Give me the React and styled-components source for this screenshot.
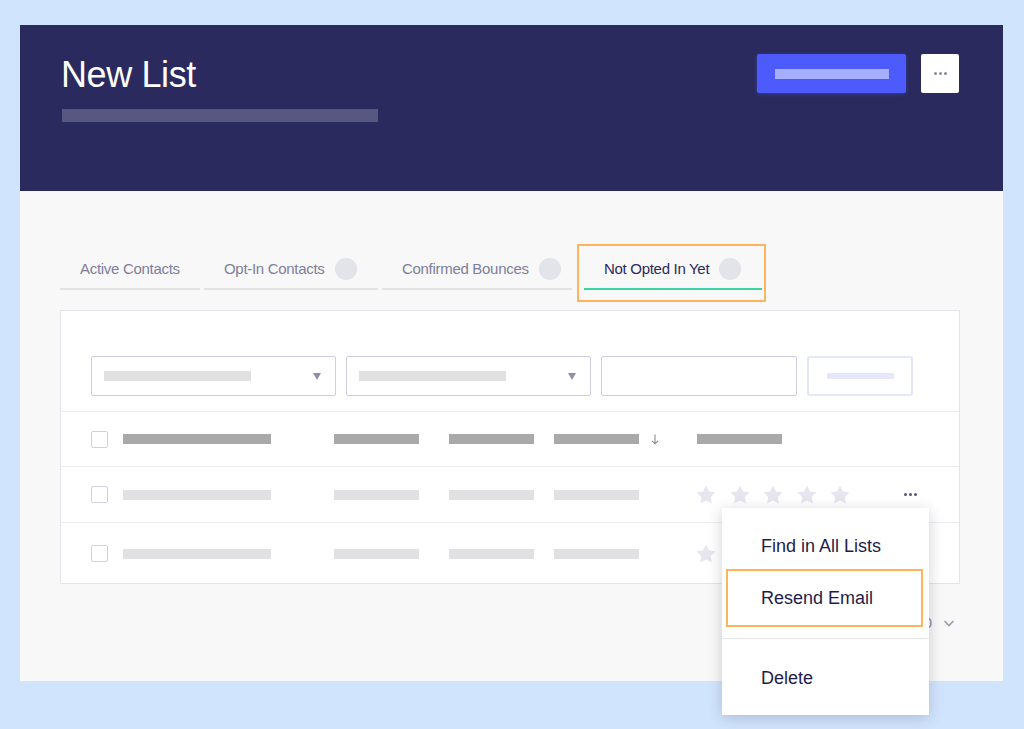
import React from 'react'
import styled, { createGlobalStyle } from 'styled-components'

const GlobalStyle = createGlobalStyle`
  html, body {
    margin: 0;
    padding: 0;
    background: #d1e4fd;
    font-family: "Liberation Sans", Arial, sans-serif;
  }
  body { height: 729px; overflow: hidden; }
`

const Frame = styled.div`
  position: relative;
  width: 983px;
  margin: 25px 0 0 20px;
`

const Header = styled.header`
  height: 166px;
  box-sizing: border-box;
  background: #2b2a5e;
  display: flex;
  justify-content: space-between;
  align-items: flex-start;
  padding: 29px 44px 0 41px;
`

const Title = styled.h1`
  margin: 0;
  font-size: 36px;
  line-height: 42px;
  font-weight: 400;
  color: #ffffff;
  letter-spacing: -0.4px;
`

const Bar = styled.div`
  width: ${p => p.$w}px;
  height: ${p => p.$h || 10}px;
  background: ${p => p.$c};
  flex-shrink: 0;
`

const SubBar = styled(Bar)`
  margin: 13px 0 0 1px;
`

const Actions = styled.div`
  display: flex;
  gap: 15px;
`

const PrimaryButton = styled.button`
  width: 149px;
  height: 39px;
  border: 0;
  border-radius: 2px;
  background: #4e5bfc;
  box-shadow: 0 1px 4px rgba(78, 91, 252, 0.35);
  display: flex;
  align-items: center;
  justify-content: center;
  padding: 0;
`

const MoreButton = styled.button`
  width: 38px;
  height: 39px;
  border: 0;
  border-radius: 2px;
  background: #ffffff;
  display: flex;
  align-items: center;
  justify-content: center;
  padding: 0;
`

const Dots = styled.span`
  display: flex;
  gap: 2px;
  & > i {
    width: 3px;
    height: 3px;
    border-radius: 50%;
    background: ${p => p.$c};
  }
`

const Body = styled.section`
  height: 490px;
  box-sizing: border-box;
  background: #f8f8f8;
  padding: 53px 43px 0 40px;
`

const TabRow = styled.div`
  display: flex;
  align-items: flex-start;
  gap: 4px;
`

const Tab = styled.div`
  width: ${p => p.$w}px;
  height: 41px;
  box-sizing: border-box;
  display: flex;
  align-items: center;
  gap: 10px;
  padding: 0 0 0 20px;
  margin-top: ${p => (p.$active ? 0 : 5)}px;
  border-bottom: 2px solid ${p => (p.$active ? '#3ad5a0' : '#e3e3e6')};
  font-size: 15px;
  color: ${p => (p.$active ? '#2b2a5e' : '#7d7f9b')};
  letter-spacing: -0.3px;
  white-space: nowrap;
`

const Badge = styled.span`
  width: 22px;
  height: 22px;
  border-radius: 50%;
  background: #e3e4ea;
`

const Highlight = styled.div`
  border: 2px solid #fdb55d;
  padding: 3px 2px 10px 5px;
  margin-left: 1px;
`

const Card = styled.div`
  margin-top: 8px;
  width: 900px;
  height: 274px;
  box-sizing: border-box;
  background: #ffffff;
  border: 1px solid #e4e4ea;
`

const Filters = styled.div`
  display: flex;
  gap: 10px;
  padding: 45px 0 15px 30px;
  border-bottom: 1px solid #ececf0;
`

const Field = styled.div`
  width: ${p => p.$w}px;
  height: 40px;
  box-sizing: border-box;
  border: 1px solid ${p => (p.$soft ? '#e4e6fb' : '#cfcde2')};
  border-width: ${p => (p.$soft ? 2 : 1)}px;
  border-radius: 2px;
  display: flex;
  align-items: center;
  justify-content: ${p => (p.$soft ? 'center' : 'space-between')};
  padding: ${p => (p.$soft ? 0 : '0 14px 0 12px')};
`

const Caret = styled.span`
  width: 0;
  height: 0;
  border-left: 4.5px solid transparent;
  border-right: 4.5px solid transparent;
  border-top: 7px solid #8d8ea9;
`

const Row = styled.div`
  display: grid;
  grid-template-columns: 32px 211px 115px 105px 143px 1fr;
  align-items: center;
  height: ${p => p.$h}px;
  box-sizing: border-box;
  padding: 0 42px 0 30px;
  border-bottom: ${p => (p.$last ? 0 : '1px solid #ececf0')};
`

const Check = styled.span`
  width: 17px;
  height: 17px;
  box-sizing: border-box;
  border: 1.5px solid #d0d0de;
  border-radius: 2px;
`

const Cell = styled.div`
  display: flex;
  align-items: center;
  gap: 12px;
  justify-content: ${p => (p.$spread ? 'space-between' : 'flex-start')};
`

const Stars = styled.div`
  display: flex;
  gap: 11.5px;
  margin-left: -2px;
`

const Footer = styled.div`
  width: 900px;
  display: flex;
  justify-content: flex-end;
  align-items: center;
  gap: 10px;
  margin-top: 30px;
  padding-right: 4px;
  box-sizing: border-box;
  font-size: 15px;
  color: #8b8ca6;
`

const Menu = styled.div`
  position: absolute;
  left: 702px;
  top: 483px;
  width: 207px;
  height: 207px;
  box-sizing: border-box;
  padding: 12px 0;
  background: #ffffff;
  box-shadow: 0 3px 14px rgba(30, 30, 60, 0.2);
`

const MenuItem = styled.div`
  height: ${p => (p.$marked ? 58 : 52)}px;
  box-sizing: border-box;
  display: flex;
  align-items: center;
  padding-left: ${p => (p.$marked ? 33 : 39)}px;
  margin: ${p => (p.$marked ? '-3px 6px -3px 4px' : 0)};
  border: ${p => (p.$marked ? '2px solid #fdb55d' : 0)};
  font-size: 18px;
  color: #1f1d4b;
`

const MenuDivider = styled.div`
  height: 1px;
  background: #e8e8ec;
  margin: 14px 0 13px;
`

const Star = () => (
  <svg width="22" height="22" viewBox="0 0 24 24">
    <path d="M12 1.5l3.2 6.6 7.2 1-5.2 5.1 1.3 7.2L12 18l-6.5 3.4 1.3-7.2L1.6 9.1l7.2-1z" fill="#e5e6ee" />
  </svg>
)

const SortArrow = () => (
  <svg width="8" height="11" viewBox="0 0 8 11">
    <path d="M4 0.5v9M1 6.8L4 9.8 7 6.8" stroke="#8a8a95" strokeWidth="1.1" fill="none" />
  </svg>
)

const Chevron = () => (
  <svg width="14" height="14" viewBox="0 0 14 14">
    <path d="M2.5 5l4.5 4.5L11.5 5" stroke="#9a9bb2" strokeWidth="1.6" fill="none" />
  </svg>
)

const ThreeDots = ({ c }) => (
  <Dots $c={c}><i /><i /><i /></Dots>
)

const tabs = [
  { label: 'Active Contacts', badge: false, w: 140 },
  { label: 'Opt-In Contacts', badge: true, w: 174 },
  { label: 'Confirmed Bounces', badge: true, w: 190 },
]

const DataRow = ({ h, color, head, last, stars }) => (
  <Row $h={h} $last={last}>
    <Check />
    <Cell><Bar $w={148} $c={color} /></Cell>
    <Cell><Bar $w={85} $c={color} /></Cell>
    <Cell><Bar $w={85} $c={color} /></Cell>
    <Cell>
      <Bar $w={85} $c={color} />
      {head && <SortArrow />}
    </Cell>
    <Cell $spread>
      {head ? <Bar $w={85} $c={color} /> : (
        <Stars>
          {Array.from({ length: stars }).map((_, i) => <Star key={i} />)}
        </Stars>
      )}
      {stars === 5 && <ThreeDots c="#55557a" />}
    </Cell>
  </Row>
)

export default function App() {
  return (
    <>
      <GlobalStyle />
      <Frame>
        <Header>
          <div>
            <Title>New List</Title>
            <SubBar $w={316} $h={13} $c="#585780" />
          </div>
          <Actions>
            <PrimaryButton><Bar $w={114} $c="#a6aefe" /></PrimaryButton>
            <MoreButton><ThreeDots c="#8a8aa8" /></MoreButton>
          </Actions>
        </Header>
        <Body>
          <TabRow>
            {tabs.map(t => (
              <Tab key={t.label} $w={t.w}>
                {t.label}
                {t.badge && <Badge />}
              </Tab>
            ))}
            <Highlight>
              <Tab $active $w={178}>
                Not Opted In Yet
                <Badge />
              </Tab>
            </Highlight>
          </TabRow>
          <Card>
            <Filters>
              <Field $w={245}><Bar $w={147} $c="#e0e0e0" /><Caret /></Field>
              <Field $w={245}><Bar $w={147} $c="#e0e0e0" /><Caret /></Field>
              <Field $w={196} />
              <Field $w={106} $soft><Bar $w={67} $h={6} $c="#e5e8fd" /></Field>
            </Filters>
            <DataRow h={55} color="#a9a9a9" head />
            <DataRow h={56} color="#e1e1e3" stars={5} />
            <DataRow h={61} color="#e1e1e3" stars={1} last />
          </Card>
          <Footer>
            <span>1 – 2 of 20</span>
            <Chevron />
          </Footer>
        </Body>
        <Menu>
          <MenuItem>Find in All Lists</MenuItem>
          <MenuItem $marked>Resend Email</MenuItem>
          <MenuDivider />
          <MenuItem>Delete</MenuItem>
        </Menu>
      </Frame>
    </>
  )
}
